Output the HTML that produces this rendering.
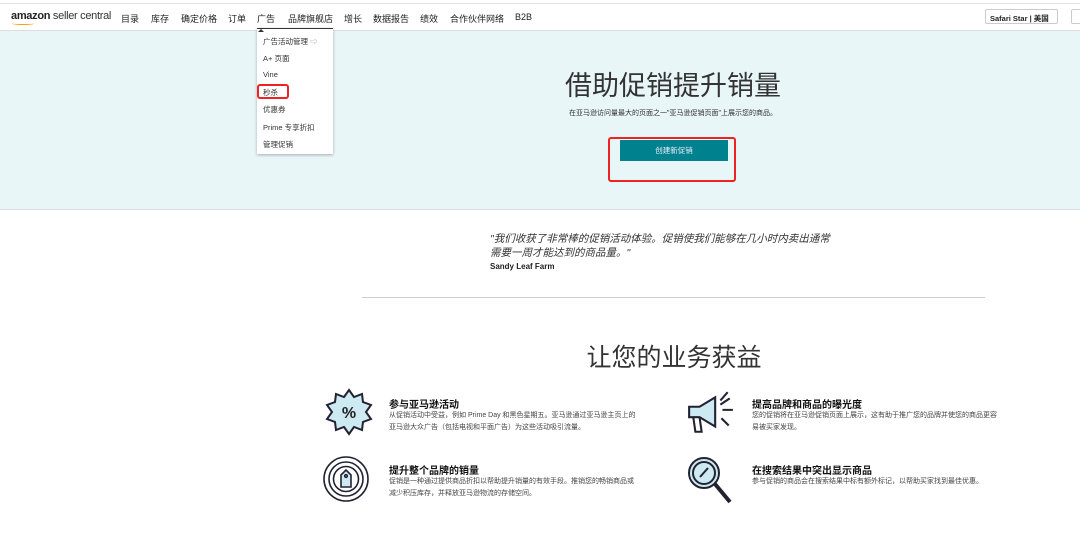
<!DOCTYPE html>
<html><head><meta charset="utf-8"><style>
*{margin:0;padding:0;box-sizing:border-box}
body{width:1080px;height:545px;overflow:hidden;background:#fff;font-family:"Liberation Sans","Noto Sans CJK SC",sans-serif;color:#222;position:relative}
.a{position:absolute;white-space:nowrap}
.nav{font-size:9px;color:#222;top:12px}
.dd{font-size:7.5px;color:#333;left:263px}
.t{font-size:10px;font-weight:bold;color:#111}
.p{font-size:7px;color:#444}
</style></head><body>
<div class="a" style="left:0;top:3px;width:1080px;height:1px;background:#e4e4e4"></div>
<div class="a" style="left:0;top:30px;width:1080px;height:180px;background:#e9f6f8;border-top:1px solid #ddd;border-bottom:1px solid #dde"></div>
<div class="a" style="left:11px;top:10px;font-size:11px;letter-spacing:-0.3px"><b>amazon</b> <span style="color:#333">seller central</span></div>
<div class="a" style="left:12px;top:22px;width:22px;height:3px;border-bottom:1.5px solid #f90;border-radius:0 0 50% 50%"></div>
<div class="a nav" style="left:121px">目录</div>
<div class="a nav" style="left:151px">库存</div>
<div class="a nav" style="left:181px">确定价格</div>
<div class="a nav" style="left:228px">订单</div>
<div class="a nav" style="left:257px">广告</div>
<div class="a nav" style="left:288px">品牌旗舰店</div>
<div class="a nav" style="left:344px">增长</div>
<div class="a nav" style="left:373px">数据报告</div>
<div class="a nav" style="left:420px">绩效</div>
<div class="a nav" style="left:450px">合作伙伴网络</div>
<div class="a nav" style="left:515px">B2B</div>
<div class="a" style="left:257px;top:28px;width:76px;height:126px;background:#fff;box-shadow:0 1px 3px rgba(0,0,0,.3);border-top:1.5px solid #333"></div>
<div class="a" style="left:258px;top:26px;width:0;height:0;border:3px solid transparent;border-bottom-color:#333"></div>
<div class="a dd" style="top:36px">广告活动管理 <span style="color:#999">⇨</span></div>
<div class="a dd" style="top:53px">A+ 页面</div>
<div class="a dd" style="top:70px">Vine</div>
<div class="a dd" style="top:87px">秒杀</div>
<div class="a" style="left:257px;top:84px;width:32px;height:15px;border:2px solid #e22;border-radius:3px"></div>
<div class="a dd" style="top:104px">优惠券</div>
<div class="a dd" style="top:122px">Prime 专享折扣</div>
<div class="a dd" style="top:139px">管理促销</div>
<div class="a" style="left:985px;top:9px;width:73px;height:15px;border:1px solid #ccc;border-radius:2px;font-size:7.5px;font-weight:bold;padding:3px 0 0 4px;background:#fff">Safari Star | 美国</div>
<div class="a" style="left:1071px;top:9px;width:12px;height:15px;border:1px solid #ccc;border-radius:2px;background:#fff"></div>
<div class="a" style="left:473px;top:64px;width:400px;text-align:center;font-size:27px;color:#333;font-family:'Liberation Sans',sans-serif">借助促销提升销量</div>
<div class="a" style="left:473px;top:108px;width:400px;text-align:center;font-size:7px;color:#333">在亚马逊访问量最大的页面之一"亚马逊促销页面"上展示您的商品。</div>
<div class="a" style="left:620px;top:140px;width:108px;height:21px;background:#00818e;color:#eef;font-size:7.5px;text-align:center;line-height:21px">创建新促销</div>
<div class="a" style="left:608px;top:137px;width:128px;height:45px;border:2px solid #e22;border-radius:3px"></div>
<div class="a" style="left:490px;top:232px;font-size:10.5px;font-style:italic;color:#333;line-height:14px">"我们收获了非常棒的促销活动体验。促销使我们能够在几小时内卖出通常<br>需要一周才能达到的商品量。"</div>
<div class="a" style="left:490px;top:262px;font-size:8px;font-weight:bold;color:#222">Sandy Leaf Farm</div>
<div class="a" style="left:362px;top:297px;width:623px;height:1px;background:#ccc"></div>
<div class="a" style="left:474px;top:338px;width:400px;text-align:center;font-size:25px;color:#333;font-family:'Liberation Sans',sans-serif">让您的业务获益</div>
<svg class="a" style="left:325px;top:388px" width="48" height="48" viewBox="0 0 48 48"><polygon points="24,2 29,9 37,6 38,14 46,17 41,24 46,31 38,34 37,42 29,39 24,46 19,39 11,42 10,34 2,31 7,24 2,17 10,14 11,6 19,9" fill="#cdeaf3" stroke="#223" stroke-width="2"/><text x="24" y="30" font-size="16" text-anchor="middle" font-weight="bold" fill="#222" font-family="Liberation Sans">%</text></svg>
<svg class="a" style="left:322px;top:455px" width="48" height="48" viewBox="0 0 48 48" fill="none" stroke="#223" stroke-width="1.6"><circle cx="24" cy="24" r="22"/><circle cx="24" cy="24" r="17"/><circle cx="24" cy="24" r="12.5"/><path d="M19 20 L24 15 L29 20 V32 H19 Z" fill="#cdeaf3"/><circle cx="24" cy="21" r="1.3"/></svg>
<svg class="a" style="left:686px;top:388px" width="50" height="50" viewBox="0 0 48 48" fill="none" stroke="#223" stroke-width="2"><path d="M3 18 H13 L28 9 V37 L13 28 H3 Z" fill="#cdeaf3"/><path d="M7 28 L9 42 H15 L13 28"/><path d="M33 12 L40 4 M35 21 H45 M34 29 L41 36 M33 16 L42 10"/></svg>
<svg class="a" style="left:686px;top:455px" width="48" height="50" viewBox="0 0 48 50" fill="none" stroke="#223" stroke-width="2"><circle cx="18" cy="18" r="15" fill="#cdeaf3"/><circle cx="18" cy="18" r="11"/><path d="M14 22 L22 13"/><path d="M29 29 L44 47" stroke-width="4"/></svg>
<div class="a t" style="left:389px;top:396px">参与亚马逊活动</div>
<div class="a p" style="left:389px;top:410px;line-height:12px">从促销活动中受益，例如 Prime Day 和黑色星期五。亚马逊通过亚马逊主页上的<br>亚马逊大众广告（包括电视和平面广告）为这些活动吸引流量。</div>
<div class="a t" style="left:752px;top:396px">提高品牌和商品的曝光度</div>
<div class="a p" style="left:752px;top:410px;line-height:12px">您的促销将在亚马逊促销页面上展示，这有助于推广您的品牌并使您的商品更容<br>易被买家发现。</div>
<div class="a t" style="left:389px;top:462px">提升整个品牌的销量</div>
<div class="a p" style="left:389px;top:476px;line-height:12px">促销是一种通过提供商品折扣以帮助提升销量的有效手段。推销您的畅销商品或<br>减少积压库存，并释放亚马逊物流的存储空间。</div>
<div class="a t" style="left:752px;top:462px">在搜索结果中突出显示商品</div>
<div class="a p" style="left:752px;top:476px">参与促销的商品会在搜索结果中标有额外标记，以帮助买家找到最佳优惠。</div>
</body></html>
